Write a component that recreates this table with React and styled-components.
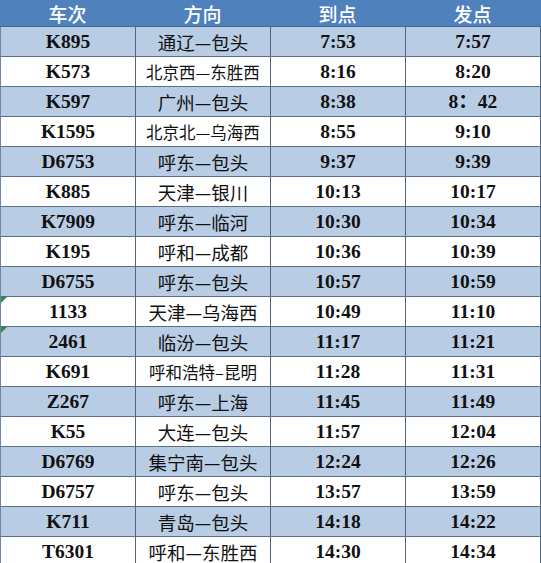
import React from "react";
import styled, { createGlobalStyle } from "styled-components";

const Global = createGlobalStyle`
  html, body { margin: 0; padding: 0; background: #ffffff; overflow: hidden; }
  #root { width: 541px; height: 563px; overflow: hidden; }
`;

const Table = styled.div`
  width: 541px;
  display: flex;
  flex-direction: column;
`;

const HeaderRow = styled.div`
  display: grid;
  grid-template-columns: 135px 135px 135px 135px 1px;
  height: 27px;
  box-sizing: border-box;
  background: #4f81bd;
  border-bottom: 1px solid #3f6797;
`;

const HeadCell = styled.div`
  display: flex;
  align-items: center;
  justify-content: center;
  color: #ffffff;
  font-family: "Noto Sans CJK SC", sans-serif;
  font-weight: 500;
  font-size: 19px;
  line-height: 1;
`;

const Row = styled.div`
  position: relative;
  display: grid;
  grid-template-columns: 135px 135px 135px 135px 1px;
  height: 30px;
  box-sizing: border-box;
  background: ${(p) => (p.$alt ? "#b8cce4" : "#ffffff")};
  border-bottom: 1px solid #5d6f8c;
  border-left: 1px solid #6f86a8;
`;

const Marker = styled.span`
  position: absolute;
  left: 0;
  top: 0;
  width: 0;
  height: 0;
  border-top: 6px solid #2f8f3f;
  border-right: 6px solid transparent;
`;

const Cell = styled.div`
  display: flex;
  align-items: center;
  justify-content: center;
  border-right: 1px solid #55657e;
  color: #111111;
  white-space: nowrap;
  line-height: 1;
  font-family: ${(p) =>
    p.$cjk
      ? '"Noto Sans CJK SC", sans-serif'
      : '"Liberation Serif", "Noto Sans CJK SC", serif'};
  font-weight: ${(p) => (p.$cjk ? 400 : 700)};
  font-size: ${(p) => (p.$small ? "16.5px" : p.$cjk ? "18.5px" : "19.5px")};
  padding-top: 1px;
`;

const EdgeCell = styled.div`
  background: #8aa2c2;
`;

const rows = [
  ["K895", "通辽—包头", "7:53", "7:57"],
  ["K573", "北京西—东胜西", "8:16", "8:20"],
  ["K597", "广州—包头", "8:38", "8：42"],
  ["K1595", "北京北—乌海西", "8:55", "9:10"],
  ["D6753", "呼东—包头", "9:37", "9:39"],
  ["K885", "天津—银川", "10:13", "10:17"],
  ["K7909", "呼东—临河", "10:30", "10:34"],
  ["K195", "呼和—成都", "10:36", "10:39"],
  ["D6755", "呼东—包头", "10:57", "10:59"],
  ["1133", "天津—乌海西", "10:49", "11:10", true],
  ["2461", "临汾—包头", "11:17", "11:21", true],
  ["K691", "呼和浩特–昆明", "11:28", "11:31"],
  ["Z267", "呼东—上海", "11:45", "11:49"],
  ["K55", "大连—包头", "11:57", "12:04"],
  ["D6769", "集宁南—包头", "12:24", "12:26"],
  ["D6757", "呼东—包头", "13:57", "13:59"],
  ["K711", "青岛—包头", "14:18", "14:22"],
  ["T6301", "呼和—东胜西", "14:30", "14:34"],
];

export default function App() {
  return (
    <>
      <Global />
      <Table>
        <HeaderRow>
          <HeadCell>车次</HeadCell>
          <HeadCell>方向</HeadCell>
          <HeadCell>到点</HeadCell>
          <HeadCell>发点</HeadCell>
          <div />
        </HeaderRow>
        {rows.map(([no, dir, arr, dep, mark], i) => (
          <Row key={no} $alt={i % 2 === 0}>
            {mark && <Marker />}
            <Cell>{no}</Cell>
            <Cell $cjk $small={dir.length >= 7}>{dir}</Cell>
            <Cell>{arr}</Cell>
            <Cell>{dep}</Cell>
            <EdgeCell />
          </Row>
        ))}
      </Table>
    </>
  );
}
